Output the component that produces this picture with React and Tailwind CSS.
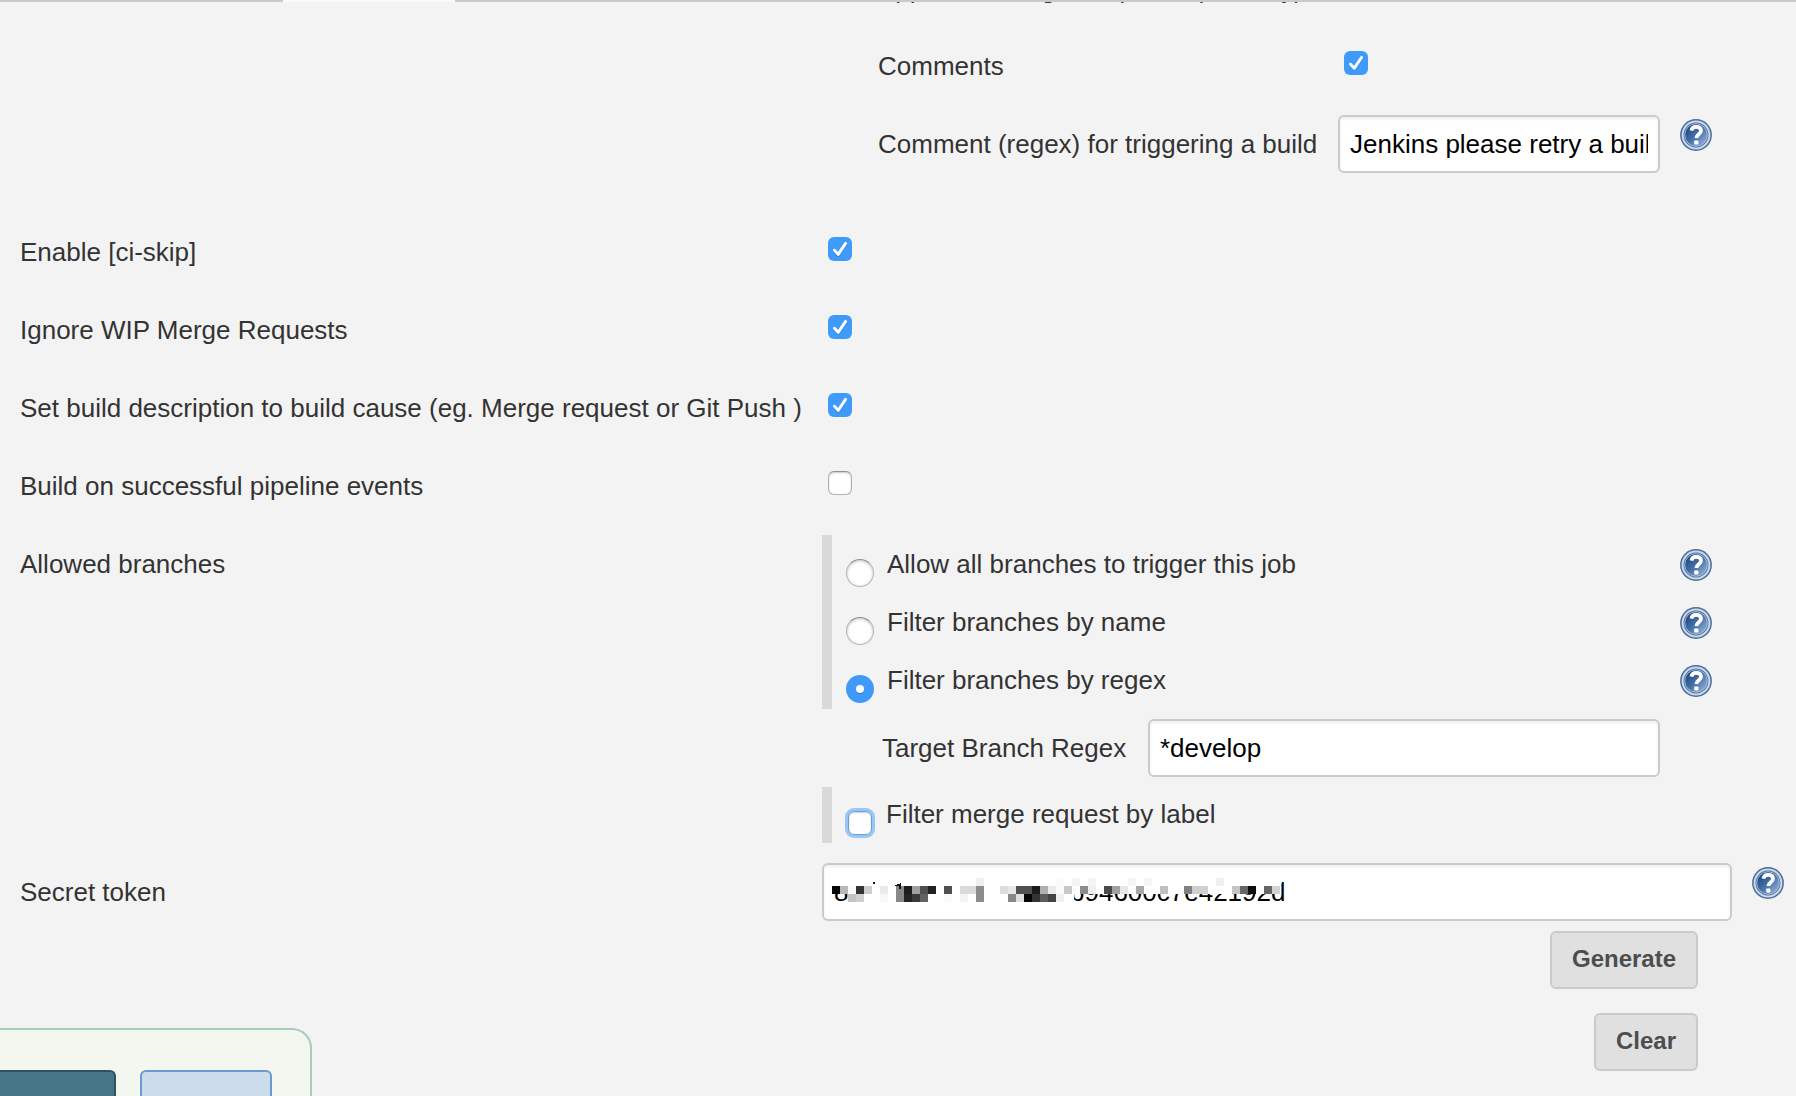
const HelpIcon = () => (
  <svg className="block size-8 shrink-0" viewBox="0 0 32 32" role="img" aria-label="Help">
    <defs>
      <linearGradient id="helpFill" x1="0" y1="0" x2="1" y2="1">
        <stop offset="0.1" stopColor="#1d4580" />
        <stop offset="0.5" stopColor="#4470aa" />
        <stop offset="0.9" stopColor="#91aed3" />
      </linearGradient>
    </defs>
    <circle cx="16" cy="16" r="15.9" fill="#4a6d9c" />
    <circle cx="16" cy="16" r="13.4" fill="#3f669d" stroke="#cbd8e8" strokeWidth="2" />
    <circle cx="16" cy="16" r="11.3" fill="url(#helpFill)" stroke="#a9bed9" strokeWidth="1" />
    <path d="M11.4 11.6c.5-2.7 2.3-3.7 4.7-3.7 2.9 0 4.9 1.4 4.9 3.9 0 3.5-4.6 3.5-4.6 7.2" fill="none" stroke="#fff" strokeWidth="3.8" />
    <rect x="14.2" y="21.4" width="4.2" height="4.2" rx="0.8" fill="#fff" />
  </svg>
);

const Checkbox = ({ checked }) =>
  checked ? (
    <span className="flex size-6 shrink-0 rounded-[6px] bg-[#3f9afa]">
      <svg viewBox="0 0 24 24" className="size-6">
        <path d="M6.5 13.4l3.7 4.1 7.4-11" transform="translate(0 1)" fill="none" stroke="#2370c4" strokeOpacity=".5" strokeWidth="2.8" strokeLinecap="round" strokeLinejoin="round" />
        <path d="M6.5 13.2l3.7 4.2 7.4-11" fill="none" stroke="#fff" strokeWidth="2.9" strokeLinecap="round" strokeLinejoin="round" />
      </svg>
    </span>
  ) : (
    <span className="block size-6 shrink-0 rounded-[6px] border border-[#b0b0b0] border-t-[#8e8e8e] bg-white shadow-[inset_0_1px_2px_rgba(0,0,0,0.22)]" />
  );

const Radio = ({ checked }) =>
  checked ? (
    <span className="flex size-7 shrink-0 items-center justify-center rounded-full bg-[#3f9afa]">
      <span className="size-2 rounded-full bg-white shadow-[0_1px_1px_rgba(20,80,160,0.5)]" />
    </span>
  ) : (
    <span className="block size-7 shrink-0 rounded-full border border-[#b4b4b4] border-t-[#8e8e8e] bg-white shadow-[inset_0_1px_3px_rgba(0,0,0,0.25)]" />
  );

const Field = ({ className, children }) => (
  <div className={`flex h-[58px] shrink-0 items-center overflow-hidden rounded-[6px] border-2 border-[#cbcbcb] bg-white pl-2.5 text-black shadow-[inset_0_2px_3px_rgba(0,0,0,0.07)] ${className}`}>
    {children}
  </div>
);

const options = [
  { label: "Allow all branches to trigger this job", checked: false },
  { label: "Filter branches by name", checked: false },
  { label: "Filter branches by regex", checked: true },
];

const toggles = [
  { label: "Enable [ci-skip]", checked: true },
  { label: "Ignore WIP Merge Requests", checked: true },
  { label: "Set build description to build cause (eg. Merge request or Git Push )", checked: true },
  { label: "Build on successful pipeline events", checked: false },
];

// Redaction mosaic over the token: [column, row, shade], 8px cells
const mosaic = [
  [0, 1, "#050505"], [1, 1, "#b8b8b8"], [2, 1, "#fafafa"], [3, 1, "#333"], [4, 1, "#cdcdcd"], [6, 1, "#ebebeb"], [8, 1, "#888"],
  [9, 1, "#1c1c1c"], [10, 1, "#a0a0a0"], [11, 1, "#505050"], [12, 1, "#222"], [14, 1, "#505050"], [16, 1, "#dadada"], [17, 1, "#dadada"], [18, 1, "#8c8c8c"],
  [3, 2, "#d0d0d0"], [2, 2, "#c4c4c4"], [6, 2, "#f8f8f8"], [8, 2, "#888"], [9, 2, "#242424"], [10, 2, "#3a3a3a"], [11, 2, "#626262"], [14, 2, "#fafafa"], [16, 2, "#f3f3f3"], [18, 2, "#8c8c8c"],
  [18, 0, "#f0f0f0"], [21, 1, "#dcdcdc"], [22, 1, "#e8e8e8"], [23, 1, "#505050"], [24, 1, "#505050"], [25, 1, "#1c1c1c"], [26, 1, "#b0b0b0"], [27, 1, "#ebebeb"], [28, 1, "#fafafa"],
  [22, 2, "#888"], [23, 2, "#dedede"], [24, 2, "#050505"], [25, 2, "#333"], [26, 2, "#5c5c5c"], [27, 2, "#444"], [28, 2, "#f0f0f0"],
  [28, 0, "#fafafa"], [30, 0, "#f3f3f3"], [32, 0, "#f5f5f5"], [37, 0, "#f5f5f5"], [39, 0, "#f5f5f5"], [48, 0, "#f0f0f0"],
  [29, 1, "#c8c8c8"], [31, 1, "#8c8c8c"], [32, 1, "#f0f0f0"], [34, 1, "#4a4a4a"], [35, 1, "#a0a0a0"], [36, 1, "#e8e8e8"], [38, 1, "#a8a8a8"],
  [41, 1, "#c0c0c0"], [44, 1, "#808080"], [45, 1, "#cecece"], [46, 1, "#d0d0d0"], [50, 1, "#c4c4c4"], [51, 1, "#666"], [52, 1, "#0c0c0c"], [54, 1, "#666"], [55, 1, "#d4d4d4"],
];

export default function App() {
  return (
    <div className="relative flex h-[1096px] w-[1796px] flex-col overflow-hidden bg-[#f3f3f3] font-['Liberation_Sans',Arial,sans-serif] text-[26px] leading-[30px] text-[#333] whitespace-nowrap">
      <div className="flex h-0.5 shrink-0 bg-[#cacaca]">
        <div className="ml-[283px] w-[172px] bg-[#f9f9f9]" />
      </div>

      <div className="h-[35px] shrink-0 overflow-hidden pl-[878px]">
        <div className="-mt-7">Approved Merge Requests (EE-only)</div>
      </div>
      <div className="flex h-[78px] shrink-0 pt-3.5 pl-[878px]">
        <div className="w-[466px]">Comments</div>
        <Checkbox checked />
      </div>
      <div className="mb-[30px] flex h-[78px] shrink-0 pl-[878px]">
        <div className="w-[460px] pt-3.5">Comment (regex) for triggering a build</div>
        <Field className="w-[322px]"><span className="w-[298px] overflow-hidden">Jenkins please retry a build</span></Field>
        <div className="pt-1 pl-5"><HelpIcon /></div>
      </div>

      {toggles.map((t) => (
        <div key={t.label} className="flex h-[78px] shrink-0 pt-3.5 pl-5">
          <div className="w-[808px]">{t.label}</div>
          <Checkbox checked={t.checked} />
        </div>
      ))}

      <div className="flex shrink-0">
        <div className="w-[822px] shrink-0 pt-3.5 pl-5">Allowed branches</div>
        <div className="flex flex-col">
          <div className="border-l-[10px] border-[#d9d9d9]">
            {options.map((o) => (
              <div key={o.label} className="flex h-[58px] pl-3.5">
                <div className="pt-6"><Radio checked={o.checked} /></div>
                <div className="w-[793px] pt-3.5 pl-[13px]">{o.label}</div>
                <div className="pt-3.5 pl-[13px]"><HelpIcon /></div>
              </div>
            ))}
          </div>
          <div className="flex h-[78px] pt-2.5 pl-[60px]">
            <div className="w-[266px] pt-3.5">Target Branch Regex</div>
            <Field className="w-[512px]">*develop</Field>
          </div>
          <div className="flex h-14 border-l-[10px] border-[#d9d9d9] pl-4">
            <div className="pt-6">
              <span className="block size-6 rounded-[6px] border border-[#6d9fd6] bg-white shadow-[0_0_0_3px_#98c6f6,inset_0_1px_2px_rgba(0,0,0,0.2)]" />
            </div>
            <div className="pt-3 pl-3.5">Filter merge request by label</div>
          </div>
        </div>
      </div>

      <div className="mt-5 flex shrink-0 pl-5">
        <div className="w-[802px] pt-3.5">Secret token</div>
        <Field className="relative w-[910px]">
          <span className="w-[236px]">8c</span>
          <span>b94600c7e42192d</span>
          <svg className="absolute top-[13px] left-2 h-[25px] w-[456px]" viewBox="0 0 456 25" shapeRendering="crispEdges">
            <rect x="0" y="0" width="450" height="16" fill="#fff" />
            <rect x="28" y="0" width="214" height="25" fill="#fff" />
            {mosaic.map(([c, r, fill]) => (
              <rect key={`${c}-${r}`} x={c * 8} y={r * 8} width="8" height="8" fill={fill} />
            ))}
            <path d="M41 4h2v2h-2zM69 5v6h-2v-3h-5z" fill="#111" />
            <path d="M449 5v12h1V4z" fill="#777" />
          </svg>
        </Field>
        <div className="pt-1 pl-5"><HelpIcon /></div>
      </div>
      <div className="flex w-[1698px] shrink-0 flex-col items-end gap-6 pt-2.5 text-[24px] leading-7 font-bold text-[#4d4d4d]">
        <button className="h-[58px] w-[148px] rounded-[6px] border-2 border-[#cacaca] bg-[#e0e0e0] pb-0.5">Generate</button>
        <button className="h-[58px] w-[104px] rounded-[6px] border-2 border-[#cacaca] bg-[#e0e0e0] pb-0.5">Clear</button>
      </div>

      <div className="absolute bottom-0 left-0 flex h-[68px] w-[312px] justify-between rounded-tr-[20px] border-t-2 border-r-2 border-[#a9cbb8] bg-[#f4f7f0] pt-10 pr-[38px]">
        <div className="w-[116px] rounded-tr-[6px] border-t-2 border-r-2 border-[#335260] bg-[#467685]" />
        <div className="w-[132px] rounded-t-[6px] border-2 border-b-0 border-[#6a9ad0] bg-[#cddcec]" />
      </div>
    </div>
  );
}
